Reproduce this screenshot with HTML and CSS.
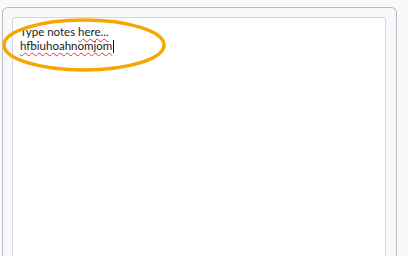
FILE: index.html
```html
<!DOCTYPE html>
<html lang="en">
<head>
    <meta charset="UTF-8">
    <meta name="viewport" content="width=device-width, initial-scale=1.0">
    <title>Notes</title>
    <link rel="stylesheet" href="styles.css">
</head>
<body>
    <div class="panel">
        <div class="notes">
            <div class="line">Type notes <span class="typo">here...</span></div>
            <div class="line"><span class="typo">hfbiuhoahnomjom</span><span class="caret"></span></div>
        </div>
    </div>

    <!-- highlight ring -->
    <svg class="ring" width="170" height="60" viewBox="0 0 170 60">
        <ellipse cx="84" cy="29" rx="80" ry="25" fill="none" stroke="#f7a600" stroke-width="3.5"/>
    </svg>
</body>
</html>
```

FILE: styles.css
```css
* {
    box-sizing: border-box;
}

html,
body {
    margin: 0;
    padding: 0;
    background-color: #f8f9fa;
    font-family: Lato, "Noto Sans", sans-serif;
}

body {
    width: 408px;
    height: 256px;
    overflow: hidden;
    position: relative;
}

.panel {
    margin: 7px 11px 0 2px;
    padding: 9px 10px 0 9px;
    height: 249px;
    border: 1px solid #b9bdc3;
    border-bottom: none;
    border-radius: 6px 6px 0 0;
    background-color: #f8f9fa;
}

.notes {
    height: 240px;
    padding: 7px 7px;
    border: 1px solid #d3d7dc;
    border-bottom: none;
    border-radius: 4px 4px 0 0;
    background-color: #fff;
    color: #1c1c1c;
    font-size: 11.5px;
    line-height: 14px;
}

.typo {
    text-decoration: underline wavy #e53935;
    text-decoration-thickness: 1px;
    text-underline-offset: 2px;
}

.caret {
    display: inline-block;
    width: 1px;
    height: 13px;
    margin-left: 1px;
    vertical-align: -3px;
    background-color: #111;
}

.ring {
    position: absolute;
    left: 0;
    top: 16px;
}
```
